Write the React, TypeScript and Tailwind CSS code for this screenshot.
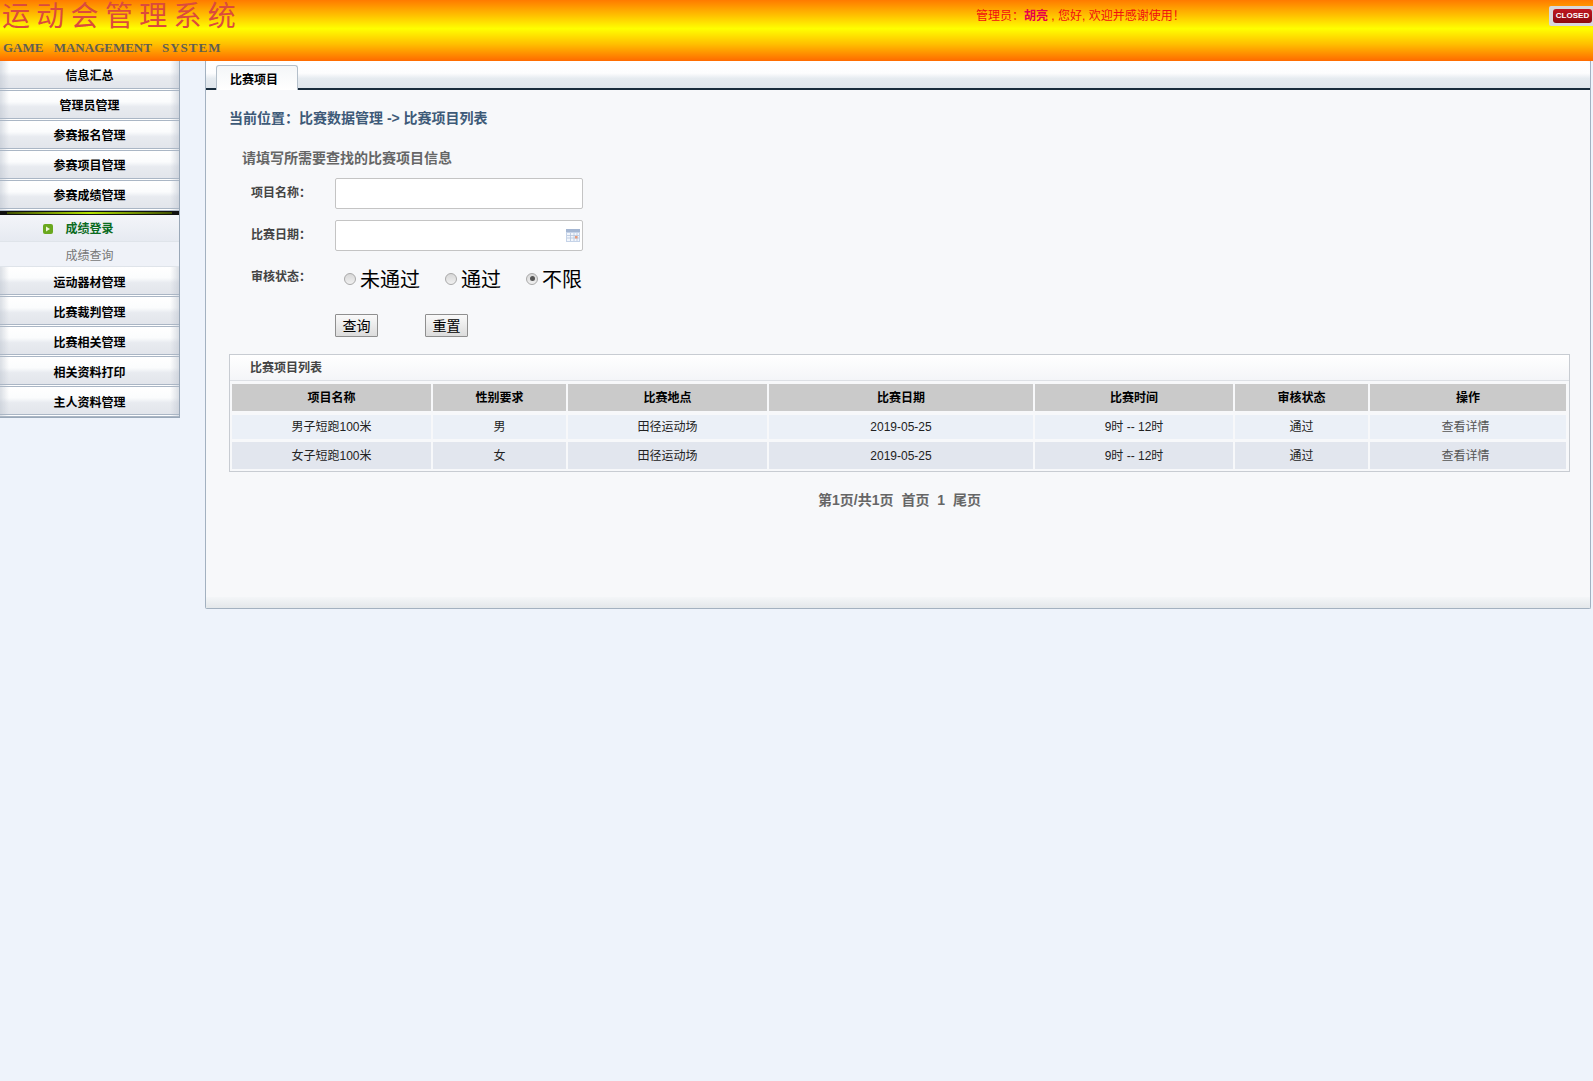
const cjk = '"Liberation Sans", "Noto Sans CJK SC", sans-serif';

const menuTop = ["信息汇总", "管理员管理", "参赛报名管理", "参赛项目管理", "参赛成绩管理"];
const menuBottom = ["运动器材管理", "比赛裁判管理", "比赛相关管理", "相关资料打印", "主人资料管理"];

const columns = [
  { title: "项目名称", width: 199 },
  { title: "性别要求", width: 133 },
  { title: "比赛地点", width: 199 },
  { title: "比赛日期", width: 264 },
  { title: "比赛时间", width: 198 },
  { title: "审核状态", width: 133 },
  { title: "操作", width: 196 },
];

const rows = [
  ["男子短跑100米", "男", "田径运动场", "2019-05-25", "9时 -- 12时", "通过", "查看详情"],
  ["女子短跑100米", "女", "田径运动场", "2019-05-25", "9时 -- 12时", "通过", "查看详情"],
];

function MenuItem({ label, lower }: { label: string; lower?: boolean }) {
  return (
    <div
      className={`h-[30px] flex items-center justify-center text-[12px] font-bold text-black border-b-[3px] border-double border-[#aab6c5] bg-[linear-gradient(to_right,rgba(190,197,208,0.55),rgba(255,255,255,0)_5%,rgba(255,255,255,0)_95%,rgba(190,197,208,0.55)),linear-gradient(to_bottom,#ffffff_0%,#fbfcfd_40%,#e8ebf0_58%,#e2e5eb_100%)] ${lower ? "pt-[5px]" : "pt-[3px]"}`}
    >
      {label}
    </div>
  );
}

function Radio({ label, checked, className }: { label: string; checked?: boolean; className: string }) {
  return (
    <label className={`flex items-center ${className}`}>
      <span className="w-[12px] h-[12px] -mt-[1px] rounded-full border border-[#a9a9a9] bg-gradient-to-b from-[#d8d8d8] to-[#f0f0f0] flex items-center justify-center">
        {checked && <span className="w-[5px] h-[5px] rounded-full bg-[#555555]" />}
      </span>
      <span className="ml-[4px] pt-[2px] text-[20px] leading-[24px] text-black">{label}</span>
    </label>
  );
}

export default function App() {
  return (
    <div className="min-h-[1081px] bg-[#eef3fb]" style={{ fontFamily: cjk }}>
      {/* Header */}
      <header className="relative h-[61px] bg-[linear-gradient(to_bottom,#ff7a00_0%,#ffc000_25%,#ffff00_47%,#ffc000_72%,#ff6a00_100%)]">
        <div className="pl-[2px] text-[28px] leading-[33px] tracking-[6.3px] text-[#dc4a3c]">运动会管理系统</div>
        <div className="pl-[3px] mt-[7px] text-[13px] leading-[16px] font-bold text-[#5f5f52] [word-spacing:7px]" style={{ fontFamily: '"Liberation Serif", serif' }}>
          GAME MANAGEMENT <span className="tracking-[1px]">SYSTEM</span>
        </div>
        <div className="absolute left-[976px] top-[7px] text-[12px] leading-[18px] text-[#f01010]">
          管理员：<span className="font-bold text-[#e8004a]">胡亮</span> , 您好, 欢迎并感谢使用！
        </div>
        <div className="absolute left-[1549px] top-[6px] w-[44px] h-[20px] bg-[#d8d8dc] rounded-l-[2px] pl-[4px] pr-[1px] py-[3px]">
          <div className="h-[14px] rounded-[3px] bg-gradient-to-b from-[#c01820] to-[#8c0a10] flex items-center justify-center text-[8px] font-bold text-white">
            CLOSED
          </div>
        </div>
      </header>

      <div className="flex items-start">
        {/* Sidebar */}
        <aside className="w-[180px] shrink-0 border-r border-b border-[#9aa8b8]">
          {menuTop.map((m) => (
            <MenuItem key={m} label={m} />
          ))}
          <div className="h-[4px] py-[1px] px-[7px] bg-[#111111]">
            <div className="h-full bg-[linear-gradient(to_right,#3f4f00,#b4e400_50%,#3f4f00)]" />
          </div>
          <div className="h-[27px] flex items-center justify-center relative pt-[2px] text-[12px] font-bold text-[#0b6b1f] border-b border-[#dfe4ea] bg-gradient-to-b from-[#f3f5f9] to-[#e6eaf1]">
            <span className="absolute left-[43px] top-[9px] w-[10px] h-[10px] rounded-[2px] bg-[#6aa81e] flex items-center justify-center">
              <svg width="6" height="6" viewBox="0 0 6 6"><path d="M1 0.5 L5 3 L1 5.5 Z" fill="#eef6d8" /></svg>
            </span>
            成绩登录
          </div>
          <div className="h-[25px] flex items-center justify-center pt-[3px] text-[12px] text-[#777777] border-b border-[#dfe4ea] bg-[#eff2f8]">成绩查询</div>
          {menuBottom.map((m) => (
            <MenuItem key={m} label={m} lower />
          ))}
        </aside>

        {/* Main panel */}
        <main className="ml-[25px] w-[1386px] h-[548px] flex flex-col border-x border-b border-[#a3b1c0] rounded-b-[2px] bg-[#f7f8fa]">
          <div className="h-[29px] shrink-0 flex items-end pl-[10px] border-b-2 border-[#1a2c3c] rounded-t-[3px] bg-[linear-gradient(to_bottom,#ffffff_0%,#fdfdfe_45%,#e6ebf0_65%,#e0e6ec_100%)]">
            <div className="w-[82px] h-[25px] -mb-[2px] flex items-center justify-center pr-[6px] pt-[3px] text-[12px] font-bold text-black bg-gradient-to-b from-[#f4f6f8] to-[#ffffff] border-x border-t border-[#b4bfca] rounded-t-[3px]">
              比赛项目
            </div>
          </div>

          <div className="flex-1 pl-[23px]">
            <div className="mt-[18px] text-[14px] leading-[20px] font-bold text-[#3e5a78]">当前位置：比赛数据管理 -&gt; 比赛项目列表</div>
            <div className="mt-[20px] pl-[13px] text-[14px] leading-[20px] font-bold text-[#666666]">请填写所需要查找的比赛项目信息</div>

            <div className="mt-[10px] flex items-center pl-[22px]">
              <span className="w-[84px] text-[12px] leading-[28px] font-bold text-[#444444] -mt-[2px]">项目名称：</span>
              <input className="w-[248px] h-[31px] bg-white border border-[#c4c4c4] rounded-[2px]" />
            </div>
            <div className="mt-[11px] flex items-center pl-[22px]">
              <span className="w-[84px] text-[12px] leading-[28px] font-bold text-[#444444] -mt-[2px]">比赛日期：</span>
              <div className="w-[248px] h-[31px] bg-white border border-[#c4c4c4] rounded-[2px] flex items-center justify-end pr-[2px]">
                <svg width="14" height="13" viewBox="0 0 14 13">
                  <rect x="0" y="0" width="14" height="13" fill="#c5d3e8" />
                  <rect x="0" y="0" width="14" height="3" fill="#a4b6d2" />
                  <rect x="1" y="4" width="12" height="8" fill="#f2f6fc" />
                  <path d="M4.5 4 V12 M8 4 V12 M11 4 V12 M1 6.5 H13 M1 9 H13" stroke="#b5c5dc" strokeWidth="0.8" />
                  <rect x="9" y="7" width="2.5" height="2.5" fill="#e89a7a" />
                </svg>
              </div>
            </div>

            <div className="mt-[16px] h-[24px] flex items-center pl-[22px]">
              <span className="w-[84px] text-[12px] leading-[20px] font-bold text-[#444444] -mt-[4px]">审核状态：</span>
              <Radio label="未通过" className="ml-[9px]" />
              <Radio label="通过" className="ml-[25px]" />
              <Radio label="不限" checked className="ml-[25px]" />
            </div>

            <div className="mt-[23px] flex pl-[106px]">
              <button className="w-[43px] h-[23px] text-[14px] leading-[20px] text-black border border-[#8f8f8f] rounded-[1px] bg-gradient-to-b from-[#fafafa] to-[#dcdcdc]">查询</button>
              <button className="ml-[47px] w-[43px] h-[23px] text-[14px] leading-[20px] text-black border border-[#8f8f8f] rounded-[1px] bg-gradient-to-b from-[#fafafa] to-[#dcdcdc]">重置</button>
            </div>

            {/* List */}
            <div className="mt-[17px] w-[1341px] border border-[#c8ccd2]">
              <div className="h-[26px] flex items-center pl-[20px] pt-[1px] text-[12px] font-bold text-[#444444] border-b border-[#dde0e5] bg-gradient-to-b from-[#ffffff] to-[#f4f5f8]">比赛项目列表</div>
              <table className="w-[1338px] table-fixed border-separate border-spacing-x-[2px] border-spacing-y-0 text-[12px]">
                <colgroup>
                  {columns.map((c) => (
                    <col key={c.title} style={{ width: c.width }} />
                  ))}
                </colgroup>
                <thead>
                  <tr>
                    {columns.map((c) => (
                      <th key={c.title} className="pt-[3px]">
                        <div className="h-[27px] flex items-center justify-center bg-[#cacaca] font-bold text-black">{c.title}</div>
                      </th>
                    ))}
                  </tr>
                </thead>
                <tbody>
                  {rows.map((row, i) => (
                    <tr key={i}>
                      {row.map((cell, j) => (
                        <td key={j} className={i === 0 ? "pt-[4px]" : "pt-[3px] pb-[2px]"}>
                          <div
                            className={`flex items-center justify-center ${j === 6 ? "pr-[5px] text-[#555555]" : "text-[#222222]"} ${i === 0 ? "h-[24px] pb-[1px] bg-[#ebf0f7]" : "h-[27px] bg-[#e2e6ee]"}`}
                          >
                            {cell}
                          </div>
                        </td>
                      ))}
                    </tr>
                  ))}
                </tbody>
              </table>
            </div>

            <div className="mt-[18px] w-[1341px] text-center text-[14px] leading-[20px] font-bold text-[#666666] [word-spacing:4px]">第1页/共1页 首页 1 尾页</div>
          </div>

          <div className="h-[11px] shrink-0 bg-gradient-to-b from-[#f4f6f8] to-[#e3e7ea]" />
        </main>
      </div>
    </div>
  );
}
